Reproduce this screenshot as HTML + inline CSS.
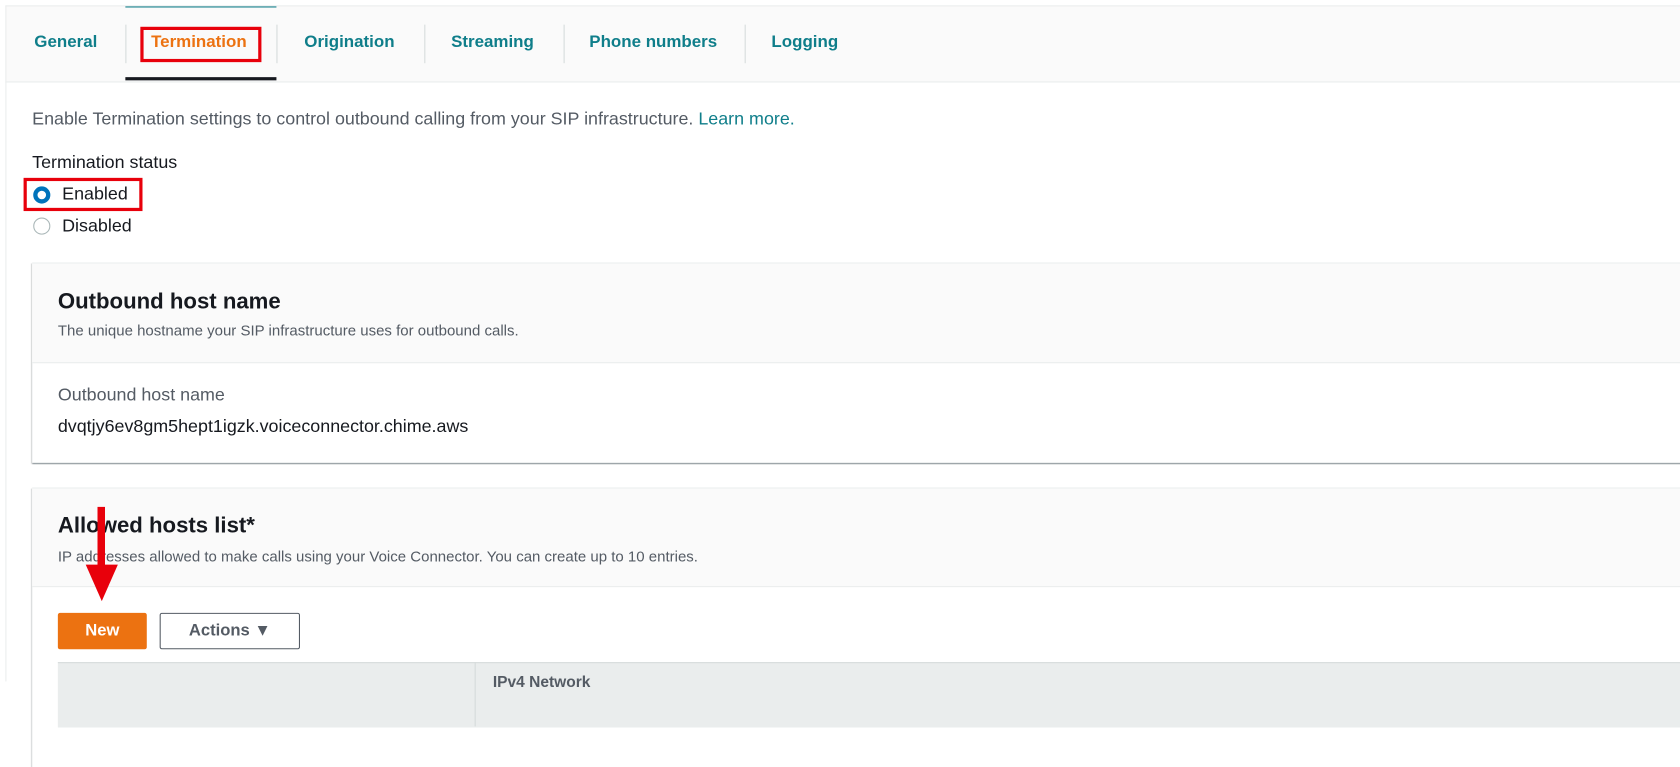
<!DOCTYPE html>
<html><head><meta charset="utf-8"><style>
html,body{margin:0;padding:0;width:1680px;height:681px;overflow:hidden;background:#fff}
#w{position:absolute;left:0;top:0;width:1568px;height:636px;transform:scale(1.07143);transform-origin:0 0;font-family:"Liberation Sans",sans-serif;color:#16191f}
.a{position:absolute;white-space:nowrap}
.tab{position:absolute;top:31px;font-size:15.8px;font-weight:bold;color:#0f7e8a}
.sep{position:absolute;top:23px;width:1px;height:36px;background:#d5dbdb}
.card{position:absolute;left:30px;width:1560px;background:#fff;box-shadow:0 1px 1px 0 rgba(0,28,36,.3),1px 1px 1px 0 rgba(0,28,36,.15),-1px 1px 1px 0 rgba(0,28,36,.15);border-top:1px solid #eaeded}
.hd{position:absolute;left:0;top:0;right:0;background:#fafafa;border-bottom:1px solid #eaeded}
.t{font-size:16.7px}
</style></head><body><div id="w">
<div class="a" style="left:5px;top:5px;width:1563px;height:70px;background:#fafafa;border-top:1px solid #eaeded;border-bottom:1px solid #eaeded;border-left:1px solid #eaeded"></div>
<div class="a" style="left:5px;top:76px;width:1px;height:560px;background:#eaeded"></div>
<div class="a" style="left:117px;top:6px;width:141px;height:1px;background:#0f7e8a"></div>
<div class="a" style="left:117px;top:72px;width:141px;height:3px;background:#16191f"></div>
<div class="tab" style="left:32px">General</div>
<div class="sep" style="left:117px"></div>
<div class="tab" style="left:141px;color:#ec7211">Termination</div>
<div class="a" style="left:131px;top:25px;width:107px;height:27px;border:3px solid #e8000b"></div>
<div class="sep" style="left:258px"></div>
<div class="tab" style="left:284px">Origination</div>
<div class="sep" style="left:396px"></div>
<div class="tab" style="left:421px">Streaming</div>
<div class="sep" style="left:526px"></div>
<div class="tab" style="left:550px">Phone numbers</div>
<div class="sep" style="left:695px"></div>
<div class="tab" style="left:720px">Logging</div>

<div class="a t" style="left:30px;top:101px;color:#545b64">Enable Termination settings to control outbound calling from your SIP infrastructure. <span style="color:#0f7e8a">Learn more.</span></div>
<div class="a t" style="left:30px;top:142px">Termination status</div>
<div class="a" style="left:31px;top:174px;width:8px;height:8px;border:4px solid #0073bb;border-radius:50%;background:#fff"></div>
<div class="a t" style="left:58px;top:171px">Enabled</div>
<div class="a" style="left:22px;top:166px;width:105px;height:25px;border:3px solid #e8000b"></div>
<div class="a" style="left:31px;top:203px;width:14px;height:14px;border:1px solid #aab7b8;border-radius:50%"></div>
<div class="a t" style="left:58px;top:201px">Disabled</div>

<div class="card" style="top:245px;height:186px">
<div class="hd" style="height:92px"></div>
<div class="a" style="left:24px;top:24px;font-size:20.7px;font-weight:bold">Outbound host name</div>
<div class="a" style="left:24px;top:54px;font-size:14px;color:#545b64">The unique hostname your SIP infrastructure uses for outbound calls.</div>
<div class="a t" style="left:24px;top:113px;color:#545b64">Outbound host name</div>
<div class="a t" style="left:24px;top:142px">dvqtjy6ev8gm5hept1igzk.voiceconnector.chime.aws</div>
</div>

<div class="card" style="top:455px;height:260px">
<div class="hd" style="height:91px"></div>
<div class="a" style="left:24px;top:23px;font-size:20.7px;font-weight:bold">Allowed hosts list*</div>
<div class="a" style="left:24px;top:55px;font-size:14px;color:#545b64">IP addresses allowed to make calls using your Voice Connector. You can create up to 10 entries.</div>
<div class="a" style="left:24px;top:116px;width:83px;height:34px;background:#ec7211;border-radius:2px;color:#fff;font-weight:bold;font-size:15.5px;line-height:34px;text-align:center">New</div>
<div class="a" style="left:119px;top:116px;width:129px;height:32px;border:1px solid #545b64;border-radius:2px;color:#545b64;font-weight:bold;font-size:15.5px;line-height:32px;text-align:center">Actions &#9660;</div>
<div class="a" style="left:24px;top:162px;width:1540px;height:60px;background:#eaeded;border-top:1px solid #d5dbdb"></div>
<div class="a" style="left:413px;top:162px;width:1px;height:60px;background:#d5dbdb"></div>
<div class="a" style="left:430px;top:173px;font-size:14.5px;font-weight:bold;color:#545b64">IPv4 Network</div>
</div>

<svg class="a" style="left:78px;top:473px" width="34" height="90" viewBox="0 0 34 90"><rect x="13" y="0" width="7" height="60" fill="#e8000b"/><polygon points="2,54 32,54 17,88" fill="#e8000b"/></svg>
</div></body></html>
